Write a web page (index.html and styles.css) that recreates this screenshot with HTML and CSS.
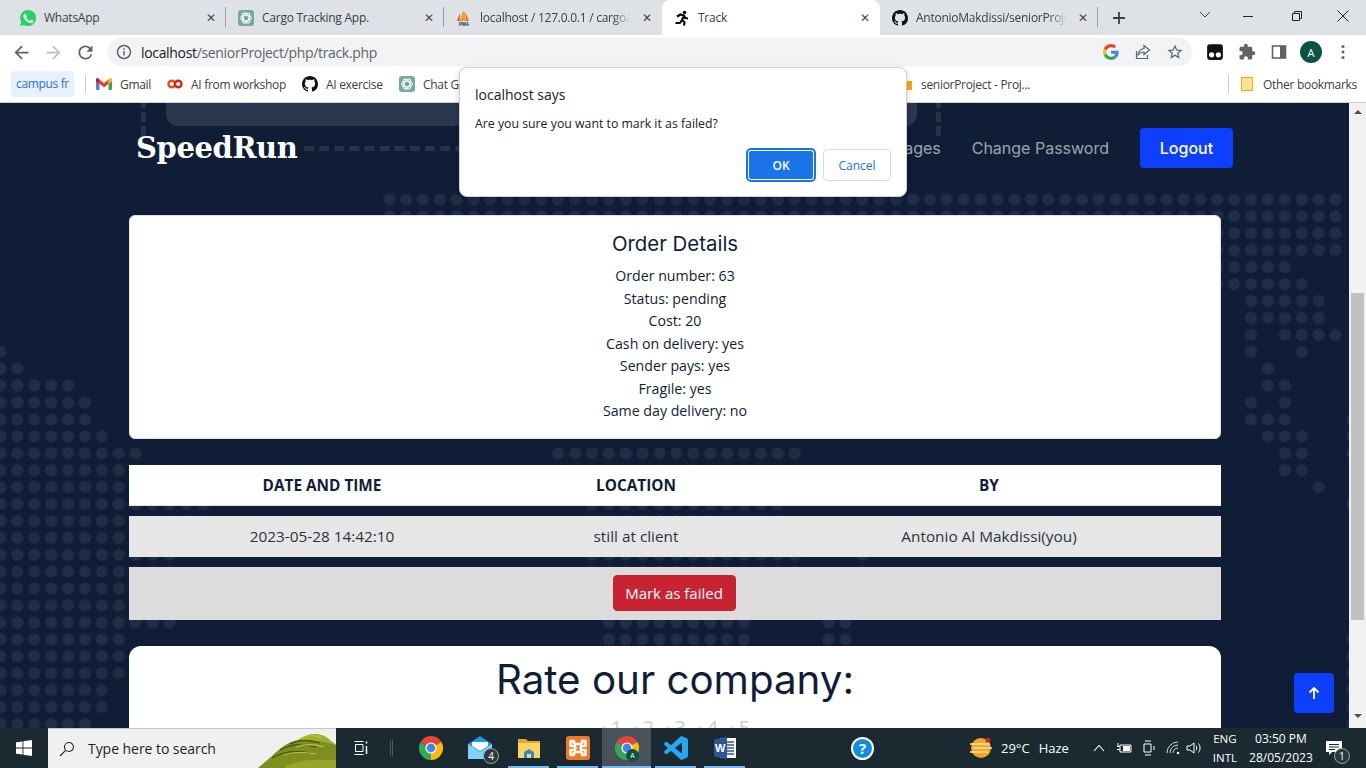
FILE: index.html
```html
<!DOCTYPE html>
<html lang="en">

<head>
  <meta charset="UTF-8" />
  <title>Track</title>
  <meta name="viewport" content="width=device-width, initial-scale=1.0" />
  <link rel="stylesheet" href="styles.css">
</head>

<body>

  <svg class="defs" width="0" height="0">
    <symbol id="gpt" viewBox="0 0 16 16">
      <rect width="16" height="16" rx="3" fill="#74aa9c" />
      <g fill="none" stroke="#fff" stroke-width="1">
        <ellipse cx="8" cy="8" rx="5.5" ry="2.8" />
        <ellipse cx="8" cy="8" rx="5.5" ry="2.8" transform="rotate(60 8 8)" />
        <ellipse cx="8" cy="8" rx="5.5" ry="2.8" transform="rotate(120 8 8)" />
      </g>
    </symbol>
    <symbol id="github" viewBox="0 0 16 16">
      <path fill="#111" d="M8 0C3.58 0 0 3.58 0 8c0 3.54 2.29 6.53 5.47 7.59.4.07.55-.17.55-.38 0-.19-.01-.82-.01-1.49-2.01.37-2.53-.49-2.69-.94-.09-.23-.48-.94-.82-1.13-.28-.15-.68-.52-.01-.53.63-.01 1.08.58 1.23.82.72 1.21 1.87.87 2.33.66.07-.52.28-.87.51-1.07-1.78-.2-3.64-.89-3.64-3.95 0-.87.31-1.59.82-2.15-.08-.2-.36-1.02.08-2.12 0 0 .67-.21 2.2.82.64-.18 1.32-.27 2-.27.68 0 1.36.09 2 .27 1.53-1.04 2.2-.82 2.2-.82.44 1.1.16 1.92.08 2.12.51.56.82 1.27.82 2.15 0 3.07-1.87 3.75-3.65 3.95.29.25.54.73.54 1.48 0 1.07-.01 1.93-.01 2.2 0 .21.15.46.55.38A8.013 8.013 0 0016 8c0-4.42-3.58-8-8-8z" />
    </symbol>
    <symbol id="chrome" viewBox="0 0 24 24">
      <path fill="#ea4335" d="M12 12L1.6 6A12 12 0 0 1 22.4 6Z" />
      <path fill="#fbbc04" d="M12 12L22.4 6A12 12 0 0 1 12 24Z" />
      <path fill="#34a853" d="M12 12L12 24A12 12 0 0 1 1.6 6Z" />
      <circle cx="12" cy="12" r="5.6" fill="#fff" />
      <circle cx="12" cy="12" r="4.4" fill="#4285f4" />
    </symbol>
  </svg>

  <!-- tab strip -->
  <div class="tabstrip">
    <div class="tab">
      <svg class="ico" viewBox="0 0 16 16">
        <path fill="#25d366" d="M8 0a8 8 0 0 0-6.900 12L0 16l4.100-1.100A8 8 0 1 0 8 0z" />
        <path fill="#fff" d="M5.300 3.700c-.4 0-.8.2-1.100.6-.4.4-.8 1-.8 2 0 1.200.8 2.300 1 2.500.1.200 1.700 2.700 4.200 3.600 2 .8 2.500.6 3 .6.500-.1 1.400-.6 1.600-1.100.2-.6.2-1 .1-1.100l-2-1c-.2-.1-.4-.1-.5.100l-.7.9c-.1.2-.3.2-.5.100-.7-.3-1.400-.6-2.100-1.300-.6-.5-1-1.100-1.200-1.700-.1-.2 0-.3.1-.4l.5-.6c.1-.2.1-.3 0-.5l-.8-1.900c-.1-.4-.5-.4-.8-.4z" />
      </svg>
      <span class="tab-title">WhatsApp</span>
      <span class="tab-x">✕</span>
    </div>
    <div class="tab">
      <svg class="ico"><use href="#gpt" /></svg>
      <span class="tab-title">Cargo Tracking App.</span>
      <span class="tab-x">✕</span>
    </div>
    <div class="tab tab-before-active">
      <svg class="ico" viewBox="0 0 16 16">
        <path fill="#f89c2a" d="M7 1L9 3v8H3.500z" />
        <path fill="#e8761a" d="M9.500 2L13 11H9.500z" />
        <path fill="#c9561a" d="M4 3L1 11h2.500z" />
        <text x="8" y="15.500" class="pma">PMA</text>
      </svg>
      <span class="tab-title fade">localhost / 127.0.0.1 / cargoa</span>
      <span class="tab-x">✕</span>
    </div>
    <div class="tab active">
      <svg class="ico" viewBox="0 0 16 16">
        <circle cx="10.500" cy="2.500" r="1.800" fill="#000" />
        <path fill="none" stroke="#000" stroke-width="2.100" stroke-linejoin="round" d="M3 6.500L6.500 4.500 10 5.500 8 10 10.500 12 10 15.500M10 5.500L11 8 14 8.500M8 10L6 13 1.500 13" />
      </svg>
      <span class="tab-title">Track</span>
      <span class="tab-x">✕</span>
    </div>
    <div class="tab">
      <svg class="ico"><use href="#github" /></svg>
      <span class="tab-title fade">AntonioMakdissi/seniorProje</span>
      <span class="tab-x">✕</span>
    </div>
    <div class="newtab">
      <svg viewBox="0 0 14 14" width="14" height="14"><path d="M7 1v12M1 7h12" stroke="#3c4043" stroke-width="1.800" /></svg>
    </div>
    <svg class="chevron" viewBox="0 0 12 8" width="12" height="8"><path d="M1 1l5 5 5-5" fill="none" stroke="#3c4043" /></svg>
    <div class="winbtns">
      <div class="winbtn"><svg viewBox="0 0 10 10" width="10" height="10"><path d="M0 5.500h10" stroke="#222" /></svg></div>
      <div class="winbtn"><svg viewBox="0 0 10 10" width="10" height="10"><path d="M.5 2.500h7v7h-7zM2.500 2.500v-2h7v7h-2" fill="none" stroke="#222" /></svg></div>
      <div class="winbtn"><svg viewBox="0 0 12 12" width="12" height="12"><path d="M.5.5l11 11M11.500.5l-11 11" stroke="#222" /></svg></div>
    </div>
  </div>

  <!-- address bar -->
  <div class="toolbar">
    <div class="tool"><svg viewBox="0 0 24 24"><path fill="#5f6368" d="M20 11H7.830l5.590-5.590L12 4l-8 8 8 8 1.410-1.410L7.830 13H20v-2z" /></svg></div>
    <div class="tool"><svg viewBox="0 0 24 24"><path fill="#bdc1c6" d="M4 11h12.170l-5.590-5.590L12 4l8 8-8 8-1.410-1.410L16.170 13H4v-2z" /></svg></div>
    <div class="tool"><svg viewBox="0 0 24 24"><path fill="#5f6368" d="M17.650 6.350A7.958 7.958 0 0 0 12 4c-4.420 0-7.990 3.580-7.990 8s3.570 8 7.990 8c3.730 0 6.840-2.550 7.730-6h-2.080A5.990 5.990 0 0 1 12 18c-3.310 0-6-2.690-6-6s2.690-6 6-6c1.660 0 3.140.69 4.220 1.780L13 11h7V4l-2.350 2.350z" /></svg></div>
    <div class="omnibox">
      <svg class="ico" viewBox="0 0 16 16">
        <circle cx="8" cy="8" r="6.500" fill="none" stroke="#5f6368" stroke-width="1.500" />
        <path d="M8 7v4.500M8 4.300v1.500" stroke="#5f6368" stroke-width="1.500" />
      </svg>
      <span class="url"><b>localhost</b>/seniorProject/php/track.php</span>
      <svg class="ico" viewBox="0 0 48 48">
        <path fill="#EA4335" d="M24 9.500c3.540 0 6.710 1.220 9.210 3.600l6.850-6.850C35.900 2.380 30.470 0 24 0 14.620 0 6.510 5.380 2.560 13.220l7.980 6.190C12.430 13.720 17.740 9.500 24 9.500z" />
        <path fill="#4285F4" d="M46.980 24.550c0-1.570-.15-3.090-.38-4.550H24v9.020h12.940c-.58 2.960-2.260 5.480-4.780 7.180l7.730 6c4.510-4.180 7.090-10.360 7.090-17.650z" />
        <path fill="#FBBC05" d="M10.530 28.590c-.48-1.450-.76-2.990-.76-4.590s.27-3.140.76-4.590l-7.980-6.190C.92 16.460 0 20.120 0 24c0 3.880.92 7.540 2.560 10.780l7.970-6.190z" />
        <path fill="#34A853" d="M24 48c6.480 0 11.930-2.130 15.890-5.810l-7.730-6c-2.150 1.450-4.920 2.300-8.160 2.300-6.260 0-11.570-4.220-13.470-9.910l-7.980 6.190C6.510 42.620 14.620 48 24 48z" />
      </svg>
      <svg class="ico" viewBox="0 0 16 16"><path fill="none" stroke="#5f6368" stroke-width="1.200" d="M1.500 7v7.500h11V11M9 1.500L14.500 6 9 10.500V8C6 8 4.500 9 3 11.500 3.500 7.500 5.500 5 9 4.500z" /></svg>
      <svg class="ico star" viewBox="0 0 24 24"><path fill="#5f6368" d="M22 9.240l-7.190-.62L12 2 9.190 8.630 2 9.240l5.460 4.730L5.820 21 12 17.270 18.180 21l-1.630-7.030L22 9.240zM12 15.400l-3.760 2.270 1-4.280-3.320-2.880 4.380-.38L12 6.100l1.710 4.040 4.380.38-3.320 2.880 1 4.280L12 15.400z" /></svg>
    </div>
    <div class="tools-right">
      <div class="tool">
        <svg viewBox="0 0 16 16">
          <rect x="1" y="1" width="14" height="14" rx="2.500" fill="#111" />
          <circle cx="5" cy="10.500" r="2.300" fill="#fff" />
          <circle cx="11" cy="10.500" r="2.300" fill="#fff" />
        </svg>
      </div>
      <div class="tool"><svg viewBox="0 0 24 24"><path fill="#5f6368" d="M20.500 11H19V7c0-1.100-.9-2-2-2h-4V3.500C13 2.120 11.880 1 10.500 1S8 2.120 8 3.500V5H4c-1.100 0-1.990.9-1.990 2v3.800H3.500c1.490 0 2.700 1.210 2.700 2.700s-1.210 2.700-2.700 2.700H2V20c0 1.100.9 2 2 2h3.800v-1.500c0-1.490 1.210-2.700 2.700-2.700 1.490 0 2.700 1.210 2.700 2.700V22H17c1.100 0 2-.9 2-2v-4h1.500c1.380 0 2.500-1.120 2.500-2.500S21.880 11 20.500 11z" /></svg></div>
      <div class="tool">
        <svg viewBox="0 0 16 16">
          <rect x="1.500" y="2" width="13" height="12" fill="none" stroke="#5f6368" stroke-width="1.600" />
          <rect x="9" y="2" width="5.500" height="12" fill="#5f6368" />
        </svg>
      </div>
      <div class="tool"><span class="avatar">A</span></div>
      <div class="tool">
        <svg viewBox="0 0 16 16">
          <circle cx="8" cy="2.500" r="1.500" fill="#5f6368" />
          <circle cx="8" cy="8" r="1.500" fill="#5f6368" />
          <circle cx="8" cy="13.500" r="1.500" fill="#5f6368" />
        </svg>
      </div>
    </div>
  </div>

  <!-- bookmarks -->
  <div class="bookmarks">
    <span class="bm-campus">campus fr</span>
    <span class="bm-sep"></span>
    <div class="bm bm-gmail">
      <svg class="ico" viewBox="0 0 16 12">
        <path fill="#4285f4" d="M0 1.500h3.500V12H1a1 1 0 0 1-1-1z" />
        <path fill="#34a853" d="M12.500 1.500H16V11a1 1 0 0 1-1 1h-2.500z" />
        <path fill="#ea4335" d="M3.500 1.500L8 5l4.500-3.500V6L8 9.500 3.500 6z" />
        <path fill="#c5221f" d="M0 1.500C0 .3 1.400-.4 2.400.4L3.500 1.500V6L0 3.500z" />
        <path fill="#fbbc04" d="M16 1.500C16 .3 14.600-.4 13.600.4L12.500 1.500V6L16 3.500z" />
      </svg>
      <span>Gmail</span>
    </div>
    <div class="bm bm-colab">
      <svg class="ico" viewBox="0 0 16 16">
        <circle cx="4.800" cy="8" r="3.300" fill="none" stroke="#e8500e" stroke-width="2.400" />
        <circle cx="11.200" cy="8" r="3.300" fill="none" stroke="#d9261c" stroke-width="2.400" />
      </svg>
      <span>AI from workshop</span>
    </div>
    <div class="bm bm-exercise">
      <svg class="ico"><use href="#github" /></svg>
      <span>AI exercise</span>
    </div>
    <div class="bm bm-chat">
      <svg class="ico"><use href="#gpt" /></svg>
      <span>Chat GPT</span>
    </div>
    <div class="bm bm-senior">
      <svg class="ico" viewBox="0 0 16 16"><path fill="#f9ab00" d="M1 3h5l2 2h7v9H1z" /></svg>
      <span>seniorProject - Proj...</span>
    </div>
    <span class="bm-sep bm-sep-right"></span>
    <div class="bm bm-other">
      <svg class="ico" viewBox="0 0 16 16"><path fill="#fde293" stroke="#f9ab00" d="M2.500 1.500h11v13h-11z" /></svg>
      <span>Other bookmarks</span>
    </div>
  </div>

  <!-- page -->
  <div class="viewport">
    <main class="page">

      <!-- backdrop -->
      <div class="hero-card"></div>
      <div class="hero-dash"></div>
      <div class="hero-dash-line"></div>
      <svg class="dotmap" viewBox="0 0 83 33" preserveAspectRatio="none">
        <defs>
          <pattern id="dot" width="1" height="1" patternUnits="userSpaceOnUse">
            <circle cx=".5" cy=".5" r=".36" fill="#1f2d45" />
          </pattern>
        </defs>
        <g fill="url(#dot)">
          <rect x="23" y="0" width="57" height="2" />
          <rect x="72" y="2" width="8" height="2" />
          <rect x="72" y="4" width="5" height="1" />
          <rect x="72" y="5" width="6" height="1" />
          <rect x="74" y="6" width="5" height="2" />
          <rect x="74" y="8" width="1" height="2" />
          <rect x="76" y="8" width="4" height="1" />
          <rect x="77" y="9" width="1" height="1" />
          <rect x="75" y="10" width="1" height="2" />
          <rect x="76" y="11" width="1" height="3" />
          <rect x="74" y="12" width="1" height="2" />
          <rect x="75" y="13" width="1" height="2" />
          <rect x="76" y="14" width="2" height="1" />
          <rect x="76" y="15" width="2" height="2" />
          <rect x="78" y="17" width="1" height="1" />
          <rect x="80" y="13" width="1" height="3" />
          <rect x="80" y="18" width="1" height="1" />
          <rect x="80" y="26" width="1" height="6" />

          <rect x="0" y="9" width="1" height="1" />
          <rect x="0" y="10" width="2" height="1" />
          <rect x="0" y="11" width="5" height="1" />
          <rect x="0" y="12" width="6" height="2" />
          <rect x="0" y="14" width="7" height="1" />
          <rect x="0" y="15" width="9" height="1" />
          <rect x="0" y="16" width="12" height="1" />
          <rect x="0" y="17" width="8" height="1" />
          <rect x="0" y="18" width="13" height="2" />
          <rect x="0" y="20" width="8" height="1" />
          <rect x="0" y="21" width="11" height="2" />
          <rect x="0" y="23" width="8" height="2" />
          <rect x="0" y="25" width="11" height="1" />
          <rect x="0" y="26" width="8" height="3" />
          <rect x="0" y="29" width="7" height="2" />
          <rect x="0" y="31" width="6" height="1" />

          <rect x="33" y="15" width="15" height="2" />
          <rect x="35" y="18" width="12" height="2" />
          <rect x="35" y="21" width="13" height="2" />
          <rect x="51" y="21" width="1" height="2" />
          <rect x="36" y="25" width="9" height="2" />
          <rect x="49" y="25" width="2" height="2" />
        </g>
      </svg>

      <header class="site-header">
        <a class="logo">SpeedRun</a>
        <nav class="site-nav">
          <a>Messages</a>
          <a>Change Password</a>
          <button class="btn-logout">Logout</button>
        </nav>
      </header>

      <section class="details">
        <h2>Order Details</h2>
        <p>Order number: 63</p>
        <p>Status: pending</p>
        <p>Cost: 20</p>
        <p>Cash on delivery: yes</p>
        <p>Sender pays: yes</p>
        <p>Fragile: yes</p>
        <p>Same day delivery: no</p>
      </section>

      <div class="track-row track-head">
        <div>DATE AND TIME</div>
        <div>LOCATION</div>
        <div>BY</div>
      </div>
      <div class="track-row track-body">
        <div>2023-05-28 14:42:10</div>
        <div>still at client</div>
        <div>Antonio Al Makdissi(you)</div>
      </div>
      <div class="track-action">
        <button class="btn-failed">Mark as failed</button>
      </div>

      <section class="rate">
        <h1>Rate our company:</h1>
        <div class="stars">
          <span><i>★</i>1</span>
          <span><i>★</i>2</span>
          <span><i>★</i>3</span>
          <span><i>★</i>4</span>
          <span><i>★</i>5</span>
        </div>
      </section>

      <button class="back-top">
        <svg viewBox="0 0 14 14" width="14" height="14"><path d="M7 13V2M2.500 6.500L7 2l4.500 4.500" fill="none" stroke="#fff" stroke-width="1.800" /></svg>
      </button>
    </main>

    <div class="scrollbar">
      <span class="arrow-up"></span>
      <span class="thumb"></span>
      <span class="arrow-down"></span>
    </div>
  </div>

  <!-- windows taskbar -->
  <div class="taskbar">
    <div class="tb-start">
      <svg viewBox="0 0 16 16" width="16" height="16"><path fill="#fff" d="M0 2.300L6.500 1.400v6.200H0zM7.400 1.300L16 0v7.600H7.400zM0 8.400h6.500v6.200L0 13.700zM7.400 8.400H16V16l-8.600-1.200z" /></svg>
    </div>
    <div class="tb-search">
      <svg viewBox="0 0 16 16" width="16" height="16"><path d="M10 1.500a4.500 4.500 0 1 1 0 9 4.500 4.500 0 0 1 0-9zM6.800 9.200L1 15" fill="none" stroke="#222" stroke-width="1.100" /></svg>
      <span>Type here to search</span>
      <svg class="tb-hills" viewBox="0 0 78 40" width="78" height="40">
        <path fill="#7f8f1f" d="M0 40L14 28C22 20 30 14 40 12 48 6 58 5 66 8 70 10 74 14 78 17V40z" />
        <path fill="#a3b02b" d="M40 12C48 6 58 5 66 8 70 10 74 14 78 17 66 13 52 12 40 12z" />
        <path fill="#9aa62a" d="M26 40c6-6 24-9 52-8v8z" />
        <path fill="none" stroke="#4e5a10" stroke-width="1.500" d="M14 30c10-6 24-8 38-5M22 22c10-5 22-7 36-3M32 16c8-4 18-5 30-1" />
        <path fill="none" stroke="#bcc63a" stroke-width="1.200" d="M44 10c6-3 14-3 20 0M38 19c8-3 18-3 28 0M26 27c8-3 20-3 32-1" />
      </svg>
    </div>
    <div class="tb-taskview">
      <svg viewBox="0 0 16 16" width="16" height="16"><path d="M1.500 1.500h9M1.500 14.500h9M2.500 4.500h7.500v7H2.500z" fill="none" stroke="#fff" /><path d="M13.500 1.500v2M13.500 6v8" stroke="#fff" stroke-width="1.500" /></svg>
    </div>
    <span class="tb-grip"></span>

    <div class="tb-app"><svg class="tb-icon"><use href="#chrome" /></svg></div>
    <div class="tb-app">
      <svg class="tb-icon" viewBox="0 0 24 24">
        <path fill="#1e9be8" d="M0 8L12 0l12 8v15H0z" />
        <path fill="#7fd0fb" d="M0 8l12 8 12-8v15H0z" />
        <path fill="#fff" d="M4 6h16v4l-8 5-8-5z" />
      </svg>
      <span class="tb-badge">4</span>
    </div>
    <div class="tb-app running">
      <svg class="tb-icon" viewBox="0 0 24 24">
        <path fill="#e8a92a" d="M1 3h8l2 2h12v4H1z" />
        <path fill="#ffd65c" d="M1 7h22v15H1z" />
        <path fill="#2a8ad4" d="M7 22v-6l5-3 5 3v6h-3v-4h-4v4z" />
      </svg>
    </div>
    <div class="tb-app running">
      <svg class="tb-icon" viewBox="0 0 24 24">
        <rect width="24" height="24" rx="3" fill="#f37a22" />
        <path fill="none" stroke="#fff" stroke-width="2.600" stroke-linejoin="round" d="M8 8h8M8 16h8M8 8V5H4.500v5H8c2 1 2 3 0 4H4.500v5H8v-3M16 8V5h3.500v5H16c-2 1-2 3 0 4h3.500v5H16v-3" />
      </svg>
    </div>
    <div class="tb-app running current">
      <svg class="tb-icon"><use href="#chrome" /></svg>
      <span class="tb-profile">A</span>
    </div>
    <div class="tb-app running">
      <svg class="tb-icon" viewBox="0 0 24 24"><path fill="#23a9f2" d="M23.150 2.587L18.210.21a1.494 1.494 0 0 0-1.705.29l-9.460 8.630-4.120-3.128a.999.999 0 0 0-1.276.057L.327 7.261A1 1 0 0 0 .326 8.740L3.899 12 .326 15.260a1 1 0 0 0 .001 1.479L1.650 17.940a.999.999 0 0 0 1.276.057l4.120-3.128 9.460 8.630a1.492 1.492 0 0 0 1.704.29l4.942-2.377A1.500 1.500 0 0 0 24 20.060V3.939a1.500 1.500 0 0 0-.85-1.352zm-5.146 14.861L10.826 12l7.178-5.448v10.896z" /></svg>
    </div>
    <div class="tb-app running">
      <svg class="tb-icon" viewBox="0 0 24 24">
        <rect x="7" y="2" width="16" height="20" fill="#fff" />
        <path d="M14 6h7M14 9h7M14 12h7M14 15h7M14 18h7" stroke="#2b579a" stroke-width="1.300" />
        <path fill="#2b579a" d="M1 3.500L14 1v22L1 20.500z" />
        <text x="7.200" y="15.500" class="word-w">W</text>
      </svg>
    </div>

    <div class="tb-help">?</div>

    <div class="tb-weather">
      <svg viewBox="0 0 24 24" width="24" height="24">
        <circle cx="12" cy="12" r="10" fill="#f5a623" />
        <circle cx="19" cy="4" r="2.500" fill="#c8281e" />
        <path d="M1 8h20M4 12h19M1 16h18" stroke="#fbe3a8" stroke-width="1.300" />
      </svg>
      <span class="tb-temp">29°C</span>
      <span class="tb-haze">Haze</span>
    </div>

    <div class="tb-tray">
      <svg viewBox="0 0 12 8" width="12" height="8"><path d="M1 7l5-5.500L11 7" fill="none" stroke="#fff" stroke-width="1.100" /></svg>
      <svg viewBox="0 0 16 12" width="16" height="12"><path d="M4 3h11v7H4zM1 4.500h3M1 7.500h3M2 1v3" fill="none" stroke="#fff" /><rect x="7" y="4" width="7" height="5" fill="#fff" /></svg>
      <svg viewBox="0 0 12 16" width="12" height="16"><path d="M2 1h6M2 15h6M1 4h7v8H1zM11 6v4" fill="none" stroke="#fff" /></svg>
      <svg viewBox="0 0 16 14" width="16" height="14"><path d="M1 12a11 11 0 0 1 11-11M4 12a8 8 0 0 1 8-8M7 12a5 5 0 0 1 5-5" fill="none" stroke="#cfd4d6" /><circle cx="12" cy="12" r="1.300" fill="#fff" /></svg>
      <svg class="tb-volume" viewBox="0 0 16 14" width="16" height="14"><path d="M1 5v4h3l4 3V2L4 5zM10 4.500c1 1.500 1 3.500 0 5M12.500 2.500c2 2.500 2 6.500 0 9" fill="none" stroke="#fff" /></svg>
    </div>

    <div class="tb-lang"><span>ENG</span><span>INTL</span></div>
    <div class="tb-clock"><span>03:50 PM</span><span>28/05/2023</span></div>
    <div class="tb-notify">
      <svg viewBox="0 0 16 16" width="16" height="16"><path fill="#fff" d="M0 1h16v11H6l-3 3v-3H0z" /><path d="M3 4.500h10M3 7h10M3 9.500h6" stroke="#1b2a30" /></svg>
      <span class="tb-count">1</span>
    </div>
  </div>

  <!-- alert box from the browser -->
  <div class="dialog">
    <div class="dialog-title">localhost says</div>
    <div class="dialog-msg">Are you sure you want to mark it as failed?</div>
    <div class="dialog-btns">
      <button class="dlg-ok">OK</button>
      <button class="dlg-cancel">Cancel</button>
    </div>
  </div>

</body>

</html>
```
FILE: styles.css
```css
* {
  box-sizing: border-box;
}

html,
body {
  margin: 0;
  padding: 0;
}

body {
  position: relative;
  width: 1366px;
  height: 768px;
  overflow: hidden;
  display: flex;
  flex-direction: column;
  font-family: "Open Sans", sans-serif;
  font-size: 12px;
  color: #3c4043;
  background-color: #fff;
}

.defs {
  position: absolute;
}

.ico {
  width: 16px;
  height: 16px;
  flex: none;
}

/* tab strip */
.tabstrip {
  height: 35px;
  flex: none;
  display: flex;
  align-items: stretch;
  padding-left: 8px;
  background-color: #dee1e6;
}

.tab {
  position: relative;
  width: 218px;
  display: flex;
  align-items: center;
  gap: 8px;
  padding: 0 7px 0 12px;
}

.tab::after {
  content: "";
  position: absolute;
  right: 0;
  top: 7px;
  height: 20px;
  width: 1px;
  background-color: #9aa0a6;
}

.tab.active {
  background-color: #fff;
  border-radius: 8px 8px 0 0;
}

.tab.active::after,
.tab-before-active::after {
  display: none;
}

.tab-title {
  flex: 1;
  min-width: 0;
  white-space: nowrap;
  letter-spacing: -0.25px;
}

.tab-title.fade {
  -webkit-mask-image: linear-gradient(to right, #000 88%, transparent);
  mask-image: linear-gradient(to right, #000 88%, transparent);
}

.tab-x {
  width: 16px;
  flex: none;
  text-align: center;
  font-family: "DejaVu Sans", sans-serif;
  font-size: 12px;
  font-weight: bold;
  color: #45494d;
}

.pma {
  font-family: "Liberation Sans", sans-serif;
  font-size: 4.500px;
  font-weight: bold;
  text-anchor: middle;
  fill: #1b2a5c;
}

.newtab {
  width: 28px;
  margin-left: 7px;
  display: flex;
  align-items: center;
  justify-content: center;
}

.chevron {
  align-self: center;
  margin-left: 66px;
  margin-bottom: 5px;
}

.winbtns {
  display: flex;
  margin-left: auto;
  margin-top: -3px;
}

.winbtn {
  width: 46px;
  display: flex;
  align-items: center;
  justify-content: center;
}

.winbtn:first-child svg {
  margin-right: 6px;
}

/* address bar */
.toolbar {
  height: 35px;
  flex: none;
  display: flex;
  align-items: center;
  padding: 0 0 1px 5px;
  background-color: #fff;
}

.tool {
  width: 32px;
  height: 28px;
  display: flex;
  align-items: center;
  justify-content: center;
}

.tool svg {
  width: 16px;
  height: 16px;
}

.toolbar > .tool svg {
  width: 21px;
  height: 21px;
}

.omnibox {
  width: 1085px;
  height: 28px;
  margin-left: 6px;
  display: flex;
  align-items: center;
  gap: 16px;
  padding: 0 9px;
  border-radius: 14px;
  background-color: #f1f3f4;
}

.omnibox .star {
  width: 18px;
  height: 18px;
  margin: 0 -1px 0 -1px;
}

.url {
  flex: 1;
  margin-left: -7px;
  font-size: 14px;
  letter-spacing: -0.33px;
  color: #5f6368;
}

.url b {
  font-weight: 400;
  color: #202124;
}

.tools-right {
  display: flex;
  margin-left: 7px;
}

.tools-right .tool:nth-child(-n+2) svg {
  width: 18px;
  height: 18px;
}

.avatar {
  width: 22px;
  height: 22px;
  border-radius: 50%;
  display: flex;
  align-items: center;
  justify-content: center;
  font-size: 11px;
  color: #fff;
  background-color: #0b5345;
}

/* bookmarks */
.bookmarks {
  height: 33px;
  flex: none;
  display: flex;
  align-items: center;
  padding: 0 0 4px 11px;
  border-bottom: 1px solid #cfd1d4;
  background-color: #fff;
}

.bm-campus {
  width: 63px;
  height: 26px;
  line-height: 26px;
  text-align: center;
  border-radius: 4px;
  color: #1a73e8;
  background-color: #e8f0fe;
  letter-spacing: -0.35px;
}

.bm-sep {
  width: 1px;
  height: 18px;
  margin: 0 10px 0 11px;
  background-color: #c8cacd;
}

.bm {
  display: flex;
  align-items: center;
  gap: 8px;
  white-space: nowrap;
  letter-spacing: -0.3px;
}

.bm-gmail {
  width: 71px;
}

.bm-gmail .ico {
  height: 12px;
}

.bm-colab {
  width: 135px;
}

.bm-exercise {
  width: 97px;
}

.bm-chat {
  width: 498px;
}

.bm-senior {
  width: 331px;
}

.bm-sep-right {
  margin: 0;
}

.bm-other {
  margin-left: 10px;
}

/* page */
.viewport {
  flex: 1;
  min-height: 0;
  display: flex;
}

.page {
  position: relative;
  flex: 1;
  overflow: hidden;
  padding-top: 25px;
  font-family: "Open Sans", sans-serif;
  background-color: #0f1e36;
}

.hero-card {
  position: absolute;
  left: 166px;
  top: -60px;
  width: 751px;
  height: 83px;
  border-radius: 12px;
  background-color: #2a374e;
}

.hero-dash {
  position: absolute;
  left: 141px;
  top: -60px;
  width: 800px;
  height: 93px;
  border-left: 5px dashed #26344a;
  border-right: 5px dashed #26344a;
}

.hero-dash-line {
  position: absolute;
  left: 304px;
  top: 43px;
  width: 600px;
  border-top: 5px dashed #26344a;
}

.dotmap {
  position: absolute;
  left: -8.45px;
  top: 87.54px;
  width: 1402.7px;
  height: 558.36px;
}

.site-header {
  position: relative;
  height: 40px;
  display: flex;
  align-items: center;
  justify-content: space-between;
  margin: 0 116px 0 136px;
}

.logo {
  font-family: "DejaVu Serif", serif;
  font-size: 29px;
  font-weight: bold;
  letter-spacing: -0.4px;
  color: #fff;
}

.site-nav {
  display: flex;
  align-items: center;
  gap: 31px;
  font-family: Inter, sans-serif;
  font-size: 16px;
  color: rgba(255, 255, 255, 0.6);
}

.btn-logout {
  width: 93px;
  height: 40px;
  border: none;
  border-radius: 4px;
  font-family: Inter, sans-serif;
  font-size: 16px;
  font-weight: 500;
  color: #fff;
  background-color: #0d3fff;
}

.details {
  position: relative;
  width: 1092px;
  height: 224px;
  margin: 47px 0 26px 129px;
  padding-top: 15px;
  text-align: center;
  font-size: 14.2px;
  line-height: 22.5px;
  color: #0f1e36;
  background-color: #fff;
  border: 1px solid #dee2e6;
  border-radius: 6px;
}

.details h2 {
  margin: 0 0 8px;
  font-family: Inter, sans-serif;
  font-size: 20.4px;
  font-weight: 400;
  line-height: 26px;
}

.details p {
  margin: 0;
}

.track-row {
  position: relative;
  width: 1092px;
  height: 41px;
  margin: 0 0 10px 129px;
  display: grid;
  grid-template-columns: 386px 242px 464px;
  align-items: center;
  text-align: center;
  font-size: 15.35px;
}

.track-head {
  font-weight: 700;
  color: #0f1e36;
  background-color: #fff;
  border-bottom: 1px solid #dee2e6;
}

.track-body {
  padding-bottom: 2px;
  color: #2a3442;
  background-color: #e6e6e6;
}

.track-action {
  position: relative;
  width: 1092px;
  height: 53px;
  margin: 0 0 26px 129px;
  padding: 0 2px 2px 0;
  display: flex;
  align-items: center;
  justify-content: center;
  background-color: #dcdcdc;
}

.btn-failed {
  width: 123px;
  height: 36px;
  border: 1px solid #c82333;
  border-radius: 4px;
  font-family: "Open Sans", sans-serif;
  font-size: 15px;
  color: #fff;
  background-color: #c82333;
}

.rate {
  position: relative;
  width: 1092px;
  height: 200px;
  margin-left: 129px;
  padding-top: 10px;
  text-align: center;
  color: #0f1e36;
  background-color: #fff;
  border-radius: 12px;
}

.rate h1 {
  margin: 0 0 10px;
  font-family: Inter, sans-serif;
  font-size: 40.3px;
  font-weight: 400;
  line-height: 48px;
}

.stars {
  display: flex;
  justify-content: center;
  gap: 9.5px;
  font-family: "Open Sans", sans-serif;
  font-size: 20px;
  line-height: 27px;
  color: #ccc;
}

.stars i {
  margin-right: 3px;
  vertical-align: 3px;
  font-family: "DejaVu Sans", sans-serif;
  font-size: 9px;
  font-style: normal;
}

.back-top {
  position: absolute;
  right: 15px;
  bottom: 15px;
  width: 40px;
  height: 40px;
  border: none;
  border-radius: 4px;
  display: flex;
  align-items: center;
  justify-content: center;
  background-color: #0d3fff;
}

.scrollbar {
  width: 17px;
  flex: none;
  display: flex;
  flex-direction: column;
  align-items: center;
  padding-top: 7px;
  background-color: #f1f1f1;
}

.arrow-up,
.arrow-down {
  width: 0;
  height: 0;
  border-left: 4px solid transparent;
  border-right: 4px solid transparent;
}

.arrow-up {
  border-bottom: 4px solid #505050;
}

.arrow-down {
  margin-top: 94px;
  border-top: 4px solid #505050;
}

.thumb {
  width: 13px;
  height: 327px;
  margin-top: 179px;
  background-color: #c1c1c1;
}

/* windows taskbar */
.taskbar {
  height: 40px;
  flex: none;
  display: flex;
  align-items: center;
  font-family: "Open Sans", sans-serif;
  color: #fff;
  background-color: #1b2a30;
}

.tb-start {
  width: 48px;
  display: flex;
  justify-content: center;
}

.tb-search {
  width: 288px;
  height: 40px;
  display: flex;
  align-items: center;
  gap: 13px;
  padding-left: 11px;
  font-size: 14px;
  letter-spacing: -0.05px;
  color: #1f1f1f;
  background-color: #f0f0f0;
  border-top: 1px solid #c8c8c8;
}

.tb-hills {
  margin-left: auto;
  margin-top: -1px;
}

.tb-taskview {
  width: 50px;
  display: flex;
  justify-content: center;
}

.tb-grip {
  width: 3px;
  height: 16px;
  margin: 0 13px 0 4px;
  border-left: 1px solid #4a575c;
  border-right: 1px solid #4a575c;
}

.tb-app {
  position: relative;
  width: 49px;
  height: 40px;
  display: flex;
  align-items: center;
  justify-content: center;
}

.tb-app.running::after {
  content: "";
  position: absolute;
  left: 4px;
  right: 4px;
  bottom: 0;
  height: 2px;
  background-color: #76b9ed;
}

.tb-app.current {
  background-color: #47525a;
}

.tb-app.current::after {
  left: 0;
  right: 0;
}

.tb-icon {
  width: 24px;
  height: 24px;
}

.word-w {
  font-family: "Liberation Sans", sans-serif;
  font-size: 11px;
  font-weight: bold;
  text-anchor: middle;
  fill: #fff;
}

.tb-badge {
  position: absolute;
  right: 5px;
  bottom: 4px;
  width: 16px;
  height: 16px;
  border-radius: 50%;
  border: 1px solid #9aa5ab;
  text-align: center;
  font-size: 10px;
  line-height: 14px;
  background-color: #2b3a40;
}

.tb-profile {
  position: absolute;
  left: 24px;
  bottom: 6px;
  width: 13px;
  height: 13px;
  border-radius: 50%;
  text-align: center;
  font-size: 7px;
  line-height: 13px;
  background-color: #0b5345;
}

.tb-help {
  width: 23px;
  height: 23px;
  margin-left: 102px;
  border-radius: 50%;
  border: 2px solid #fff;
  text-align: center;
  font-size: 15px;
  font-weight: 700;
  line-height: 19px;
  background-color: #0f8fd8;
}

.tb-weather {
  display: flex;
  align-items: center;
  margin-left: 95px;
  font-size: 13px;
}

.tb-temp {
  margin-left: 8px;
}

.tb-haze {
  margin-left: 9px;
}

.tb-tray {
  display: flex;
  align-items: center;
  gap: 11px;
  margin-left: 24px;
}

.tb-volume {
  margin-left: -7px;
}

.tb-lang,
.tb-clock {
  display: flex;
  flex-direction: column;
  align-items: center;
  font-size: 11.5px;
  line-height: 19px;
}

.tb-lang {
  margin-left: 11px;
}

.tb-clock {
  margin-left: 12px;
  font-size: 12px;
}

.tb-notify {
  position: relative;
  margin-left: 13px;
  display: flex;
}

.tb-count {
  position: absolute;
  left: 8px;
  top: 8px;
  width: 16px;
  height: 16px;
  border-radius: 50%;
  border: 1px solid #9aa5ab;
  text-align: center;
  font-size: 10px;
  line-height: 14px;
  background-color: #2b3a40;
}

/* alert */
.dialog {
  position: absolute;
  left: 459px;
  top: 67px;
  width: 448px;
  height: 130px;
  padding: 19px 15px 16px;
  background-color: #fff;
  border: 1px solid #cfd1d4;
  border-radius: 8px;
  box-shadow: 0 2px 6px rgba(0, 0, 0, 0.2);
  color: #202124;
}

.dialog-title {
  font-size: 14px;
  line-height: 16px;
}

.dialog-msg {
  margin-top: 13px;
  font-size: 12.3px;
  line-height: 16px;
}

.dialog-btns {
  display: flex;
  justify-content: flex-end;
  gap: 8px;
  margin-top: 17px;
}

.dialog-btns button {
  width: 68px;
  height: 32px;
  border-radius: 4px;
  font-family: "Open Sans", sans-serif;
  font-size: 12px;
}

.dlg-ok {
  border: 2px solid #fff;
  outline: 2px solid #1a73e8;
  outline-offset: -1px;
  font-weight: 600;
  color: #fff;
  background-color: #1a73e8;
}

.dlg-cancel {
  border: 1px solid #dadce0;
  color: #1a73e8;
  background-color: #fff;
}
```
